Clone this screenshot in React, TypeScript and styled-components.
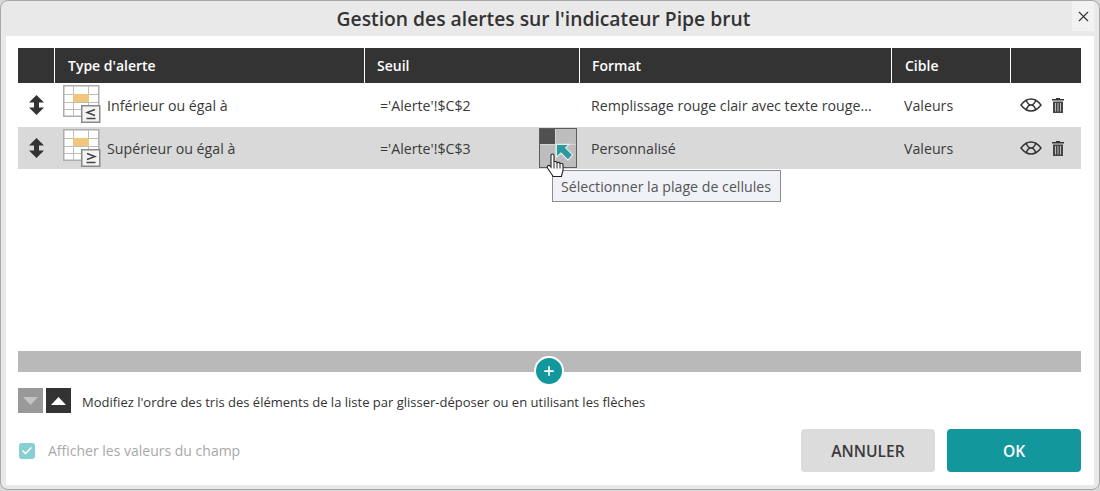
import React from "react";
import styled, { createGlobalStyle } from "styled-components";
import { Check, Plus, X } from "lucide-react";

const GlobalStyle = createGlobalStyle`
  html, body {
    margin: 0;
    padding: 0;
    width: 1100px;
    height: 491px;
    overflow: hidden;
    background: #d8d8d8;
    font-family: "Open Sans", "Noto Sans", "Liberation Sans", sans-serif;
  }
`;

const Dialog = styled.div`
  box-sizing: border-box;
  width: 1100px;
  height: 490px;
  padding: 0 5px 4px;
  display: flex;
  flex-direction: column;
  background: #e9e9e9;
  border: 1px solid #a8a8a8;
  border-radius: 8px;
  overflow: hidden;
`;

const TitleBar = styled.div`
  height: 35px;
  flex: none;
  display: flex;
  align-items: center;
  justify-content: center;
  padding-right: 13px;
  position: relative;
`;

const Title = styled.h1`
  margin: 0;
  font-size: 19.3px;
  font-weight: 600;
  color: #333;
`;

const CloseButton = styled.button`
  position: absolute;
  right: 0;
  top: 0;
  width: 22px;
  height: 30px;
  padding: 0;
  border: none;
  background: #f2f2f2;
  color: #333;
  display: flex;
  align-items: center;
  justify-content: center;
`;

const Body = styled.div`
  flex: 1;
  display: flex;
  flex-direction: column;
  padding: 12px 13px 0 12px;
  min-height: 0;
  background: #fff;
`;

const ListArea = styled.div`
  height: 303px;
  flex: none;
`;

const columns = "36px 310px 215px 312px 119px 71px";

const HeaderRow = styled.div`
  display: grid;
  grid-template-columns: ${columns};
  height: 35px;
  background: #333;
`;

const HeaderCell = styled.div<{ $pad?: number }>`
  display: flex;
  align-items: center;
  padding-left: ${(p) => p.$pad ?? 13}px;
  box-sizing: border-box;
  font-size: 14px;
  font-weight: 600;
  color: #fff;
  border-left: 1px solid #fff;

  &:first-child {
    border-left: none;
  }
`;

const Row = styled.div<{ $selected?: boolean; $height: number }>`
  display: grid;
  grid-template-columns: ${columns};
  height: ${(p) => p.$height}px;
  background: ${(p) => (p.$selected ? "#d9d9d9" : "#fff")};
  font-size: 14.2px;
  color: #3a3a3a;
  position: relative;
`;

const Cell = styled.div`
  display: flex;
  align-items: center;
  padding-left: 13px;
  box-sizing: border-box;
  white-space: nowrap;
  overflow: hidden;
`;

const HandleCell = styled(Cell)`
  padding-left: 11px;
`;

const TypeCell = styled(Cell)`
  padding-left: 9px;
  gap: 6px;
`;

const TypeIcon = styled.svg`
  align-self: flex-start;
  margin-top: 2px;
  flex: none;
`;

const ThresholdCell = styled(Cell)`
  padding-left: 16px;
`;

const FormatCell = styled(Cell)`
  padding-left: 12px;
`;

const ActionsCell = styled(Cell)`
  padding-left: 10px;
  gap: 10px;
`;

const RangeButton = styled.div`
  position: absolute;
  left: 521px;
  top: 1px;
  width: 38px;
  height: 40px;
  box-sizing: border-box;
  border: 1px solid #5c5c5c;
  background: #bdbdbd;
`;

const RangeCorner = styled.div`
  width: 15px;
  height: 15px;
  background: #505050;
`;

const RangeCross = styled.div`
  position: absolute;
  left: 15px;
  top: 0;
  width: 1px;
  height: 100%;
  background: #d4d4d4;
`;

const RangeCrossH = styled.div`
  position: absolute;
  left: 0;
  top: 15px;
  width: 100%;
  height: 1px;
  background: #d4d4d4;
`;

const RangeArrow = styled.svg`
  position: absolute;
  left: 14px;
  top: 13px;
`;

const HandCursor = styled.svg`
  position: absolute;
  left: 528px;
  top: 26px;
  z-index: 3;
`;

const Tooltip = styled.div`
  position: absolute;
  left: 534px;
  top: 43px;
  z-index: 2;
  width: 229px;
  height: 32px;
  box-sizing: border-box;
  display: flex;
  align-items: center;
  padding-left: 8px;
  border: 1px solid #8c8c8c;
  background: #f1f2f7;
  font-size: 14.2px;
  color: #555;
  white-space: nowrap;
`;

const Divider = styled.div`
  height: 21px;
  flex: none;
  background: #b9b9b9;
  position: relative;
`;

const AddButton = styled.button`
  position: absolute;
  left: 516px;
  top: 5px;
  width: 30px;
  height: 30px;
  box-sizing: border-box;
  padding: 0;
  border: 2px solid #fff;
  border-radius: 50%;
  background: #12979d;
  color: #fff;
  display: flex;
  align-items: center;
  justify-content: center;
`;

const SortRow = styled.div`
  display: flex;
  align-items: center;
  margin-top: 16px;
  height: 25px;
  font-size: 13px;
  color: #333;
`;

const SortButton = styled.div<{ $disabled?: boolean }>`
  width: 25px;
  height: 25px;
  margin-right: 3px;
  background: ${(p) => (p.$disabled ? "#999" : "#333")};
  color: ${(p) => (p.$disabled ? "#c4c4c4" : "#fff")};
  display: flex;
  align-items: center;
  justify-content: center;
`;

const SortHint = styled.span`
  margin-left: 8px;
  padding-top: 3px;
  white-space: nowrap;
`;

const Footer = styled.div`
  display: flex;
  align-items: center;
  margin-top: 16px;
  height: 43px;
`;

const CheckBox = styled.div`
  width: 16px;
  height: 16px;
  margin-left: 1px;
  border-radius: 3px;
  background: #86cfd3;
  color: #fff;
  display: flex;
  align-items: center;
  justify-content: center;
`;

const CheckLabel = styled.span`
  margin-left: 13px;
  font-size: 14px;
  color: #a8a8a8;
  flex: 1;
`;

const FooterButton = styled.button<{ $primary?: boolean }>`
  width: 134px;
  height: 43px;
  margin-left: 12px;
  border: none;
  border-radius: 4px;
  background: ${(p) => (p.$primary ? "#12979d" : "#dcdcdc")};
  color: ${(p) => (p.$primary ? "#fff" : "#3a3a3a")};
  font-family: inherit;
  font-size: 15.6px;
  font-weight: 600;
`;

function AlertIcon({ symbol }: { symbol: "le" | "ge" }) {
  return (
    <TypeIcon width="38" height="38" viewBox="0 0 38 38">
      <rect x="0.75" y="0.75" width="35" height="30.500" fill="#fff" stroke="#adadad" strokeWidth="1.5" />
      <path d="M1 9.500h34M1 17.500h34M1 24.500h34M10.500 1v30M25.500 1v30" fill="none" stroke="#bdbdbd" strokeWidth="1" />
      <rect x="10" y="9" width="16" height="8" fill="#f0c77c" />
      <rect x="18.750" y="20.750" width="18" height="16.500" fill="#f3f3f3" stroke="#8a8a8a" strokeWidth="1.5" />
      <path
        d={symbol === "le" ? "M32 24.500l-8 3 8 3" : "M24 24.500l8 3-8 3"}
        fill="none"
        stroke="#444"
        strokeWidth="1.4"
      />
      <path d="M23.500 33.500h9" stroke="#444" strokeWidth="1.4" />
    </TypeIcon>
  );
}

function MoveIcon() {
  return (
    <svg width="15" height="20" viewBox="0 0 15 20">
      <path d="M7.500 0L15 7.500H10V12.500H15L7.500 20 0 12.500H5V7.500H0z" fill="#333" />
    </svg>
  );
}

function EyeIcon() {
  return (
    <svg width="22" height="14" viewBox="0 0 22 14" fill="none" stroke="#333" strokeWidth="1.4">
      <path d="M1 7C4 3 7.500 1 11 1s7 2 10 6c-3 4-6.500 6-10 6S4 11 1 7z" />
      <path d="M6 1.800C7 5 9 7 11 7s4 2 5 5.200M16 1.800C15 5 13 7 11 7s-4 2-5 5.200" />
    </svg>
  );
}

function TrashIcon() {
  return (
    <svg width="12" height="15" viewBox="0 0 12 15">
      <path d="M4 0h4v1h4v1.500H0V1h4z" fill="#333" />
      <path d="M1 3.500h10V15H1z" fill="#444" />
      <path d="M3.500 5v8.500M6 5v8.500M8.500 5v8.500" stroke="#bdbdbd" strokeWidth="1" />
    </svg>
  );
}

function Triangle({ up }: { up?: boolean }) {
  return (
    <svg width="15" height="8" viewBox="0 0 15 8">
      <path d={up ? "M7.500 0L15 8H0z" : "M0 0h15L7.500 8z"} fill="currentColor" />
    </svg>
  );
}

export default function App() {
  return (
    <>
      <GlobalStyle />
      <Dialog>
        <TitleBar>
          <Title>Gestion des alertes sur l'indicateur Pipe brut</Title>
          <CloseButton>
            <X size={17} strokeWidth={1.6} />
          </CloseButton>
        </TitleBar>
        <Body>
          <ListArea>
            <HeaderRow>
              <HeaderCell />
              <HeaderCell>Type d'alerte</HeaderCell>
              <HeaderCell $pad={12}>Seuil</HeaderCell>
              <HeaderCell $pad={12}>Format</HeaderCell>
              <HeaderCell>Cible</HeaderCell>
              <HeaderCell />
            </HeaderRow>
            <Row $height={44}>
              <HandleCell>
                <MoveIcon />
              </HandleCell>
              <TypeCell>
                <AlertIcon symbol="le" />
                Inférieur ou égal à
              </TypeCell>
              <ThresholdCell>='Alerte'!$C$2</ThresholdCell>
              <FormatCell>Remplissage rouge clair avec texte rouge...</FormatCell>
              <Cell>Valeurs</Cell>
              <ActionsCell>
                <EyeIcon />
                <TrashIcon />
              </ActionsCell>
            </Row>
            <Row $height={42} $selected>
              <HandleCell>
                <MoveIcon />
              </HandleCell>
              <TypeCell>
                <AlertIcon symbol="ge" />
                Supérieur ou égal à
              </TypeCell>
              <ThresholdCell>='Alerte'!$C$3</ThresholdCell>
              <FormatCell>Personnalisé</FormatCell>
              <Cell>Valeurs</Cell>
              <ActionsCell>
                <EyeIcon />
                <TrashIcon />
              </ActionsCell>
              <RangeButton>
                <RangeCorner />
                <RangeCross />
                <RangeCrossH />
                <RangeArrow width="21" height="21" viewBox="0 0 18 18">
                  <path d="M2 2h11L10 5l6 6-4 4.500-6-6L2 13z" fill="#2a9aa0" stroke="#ececec" strokeWidth="1" />
                </RangeArrow>
              </RangeButton>
              <HandCursor width="19" height="25" viewBox="0 0 19 25">
                <path
                  d="M5 2.500C5 .5 8 .5 8 2.500V9c1-.8 2.500-.5 3 .6 1-.6 2.500-.3 3 .8 1.200-.4 3 0 3 1.600v5c0 2.500-1.500 4-1.500 6.500H7c-1-2.500-3.500-5-5.500-8.500-1-2 1.200-3.500 2.500-2l1 1.200z"
                  fill="#fff"
                  stroke="#222"
                  strokeWidth="1.100"
                />
                <path d="M8 10v5.500M11 10v5.500M14 10.500v5" stroke="#222" strokeWidth="1" />
              </HandCursor>
              <Tooltip>Sélectionner la plage de cellules</Tooltip>
            </Row>
          </ListArea>
          <Divider>
            <AddButton>
              <Plus size={14} strokeWidth={3} />
            </AddButton>
          </Divider>
          <SortRow>
            <SortButton $disabled>
              <Triangle />
            </SortButton>
            <SortButton>
              <Triangle up />
            </SortButton>
            <SortHint>
              Modifiez l'ordre des tris des éléments de la liste par glisser-déposer ou en utilisant les flèches
            </SortHint>
          </SortRow>
          <Footer>
            <CheckBox>
              <Check size={12} strokeWidth={3.5} />
            </CheckBox>
            <CheckLabel>Afficher les valeurs du champ</CheckLabel>
            <FooterButton>ANNULER</FooterButton>
            <FooterButton $primary>OK</FooterButton>
          </Footer>
        </Body>
      </Dialog>
    </>
  );
}
